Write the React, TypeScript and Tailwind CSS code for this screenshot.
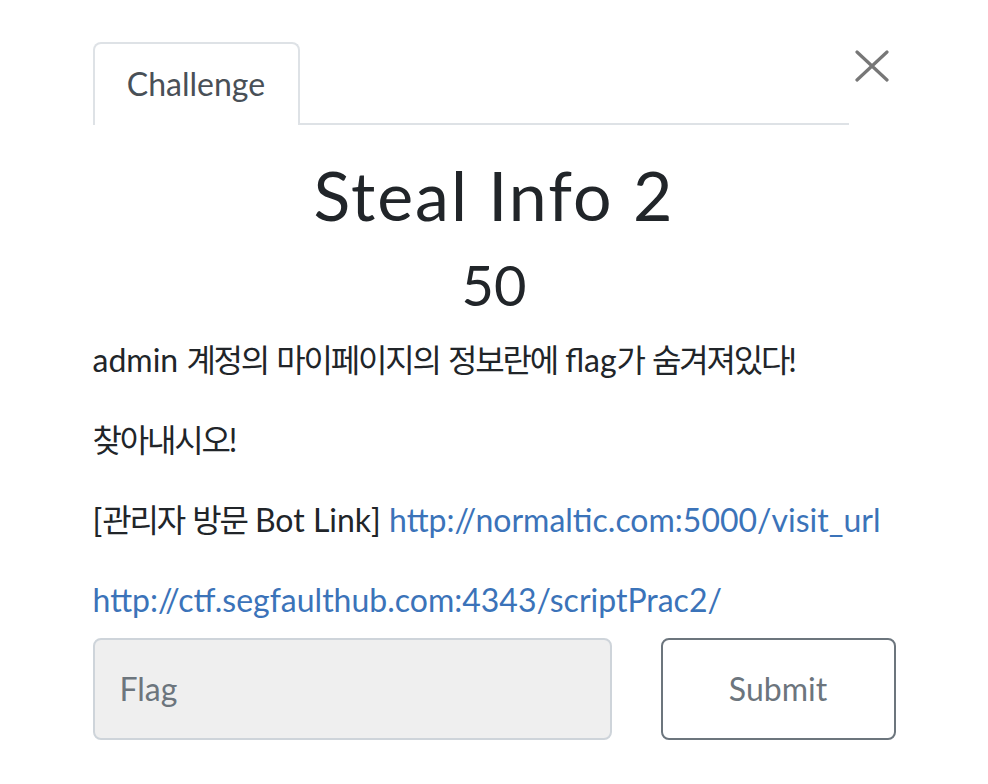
import React from 'react';

const font = { fontFamily: 'Lato, "Noto Sans CJK KR", sans-serif' };

// Hangul runs get a little negative tracking so the lines keep the reference width
function K({ children }: { children: React.ReactNode }) {
  return <span className="tracking-[-2.2px]">{children}</span>;
}

export default function App() {
  return (
    <div className="min-h-screen bg-white text-[#212529]" style={font}>
      <div className="mx-auto w-[803px] pt-[42px]">
        <div className="flex items-start">
          <div className="flex w-[756px] border-b-2 border-[#dee2e6]">
            <div className="-mb-[2px] flex h-[83px] w-[207px] items-center justify-center rounded-t-[8px] border-2 border-b-0 border-[#dee2e6] bg-white pb-[2px] text-[32px] text-[#495057]">
              Challenge
            </div>
          </div>
          <button className="ml-[6px] mt-[8px] text-[#777]">
            <svg width="34" height="32" viewBox="0 0 34 32" fill="none" stroke="currentColor" strokeWidth="3.2" strokeLinecap="round">
              <path d="M2 2 L32 30 M32 2 L2 30" />
            </svg>
          </button>
        </div>

        <h2 className="mt-[29px] text-center text-[68px] leading-[1.2] tracking-[2px]">Steal Info 2</h2>
        <h3 className="mt-[15px] text-center text-[56px] leading-[1.2]">50</h3>

        <div className="mt-[18px] text-[32px] leading-[1.5]">
          <p className="mb-[32px]">
            admin <K>계정의</K> <K>마이페이지의</K> <K>정보란에</K> flag<K>가</K> <K>숨겨져있다</K>!
          </p>
          <p className="mb-[32px]">
            <K>찾아내시오</K>!
          </p>
          <p className="mb-[32px]">
            [<K>관리자</K> <K>방문</K> Bot Link]{' '}
            <a className="text-[#3b73b9]" href="#">http://normaltic.com:5000/visit_url</a>
          </p>
          <p>
            <a className="text-[#3b73b9]" href="#">http://ctf.segfaulthub.com:4343/scriptPrac2/</a>
          </p>
        </div>

        <div className="mt-[14px] flex gap-[49px]">
          <input
            className="h-[102px] w-[519px] rounded-[8px] border-2 border-[#ced4da] bg-[#efefef] px-[25px] text-[32px] text-[#495057] placeholder:text-[#6c757d] outline-none"
            placeholder="Flag"
          />
          <button className="h-[102px] flex-1 rounded-[8px] border-2 border-[#6c757d] bg-white text-[32px] text-[#6c757d]">
            Submit
          </button>
        </div>
      </div>
    </div>
  );
}
